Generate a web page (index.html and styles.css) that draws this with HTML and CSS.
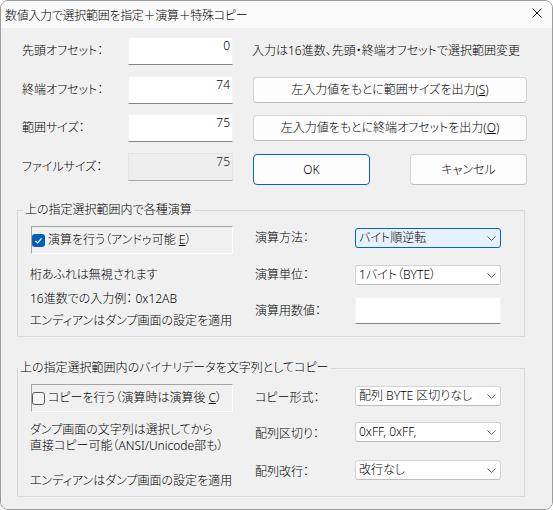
FILE: index.html
```html
<!DOCTYPE html>
<html lang="ja">
<head>
<meta charset="utf-8">
<link rel="stylesheet" href="styles.css">
</head>
<body>
<div class="window">
  <div class="titlebar">
    <span class="title">数値入力で選択範囲を指定＋演算＋特殊コピー</span>
    <svg class="close" width="10" height="10" viewBox="0 0 10 10"><path d="M0.5 0.5 L9.5 9.5 M9.5 0.5 L0.5 9.5" stroke="#1a1a1a" stroke-width="1" fill="none"/></svg>
  </div>
  <div class="content">
    <div class="top">
      <div class="lbl">先頭オフセット：</div>
      <div class="edit">0</div>
      <div class="rc note">入力は16進数、先頭・終端オフセットで選択範囲変更</div>

      <div class="lbl">終端オフセット：</div>
      <div class="edit">74</div>
      <div class="rc"><button class="btn wide">左入力値をもとに範囲サイズを出力(<u>S</u>)</button></div>

      <div class="lbl">範囲サイズ：</div>
      <div class="edit">75</div>
      <div class="rc"><button class="btn wide">左入力値をもとに終端オフセットを出力(<u>O</u>)</button></div>

      <div class="lbl">ファイルサイズ：</div>
      <div class="edit disabled">75</div>
      <div class="rc okrow"><button class="btn dlg default">OK</button><button class="btn dlg">キャンセル</button></div>
    </div>

    <fieldset class="group g1">
      <legend>上の指定選択範囲内で各種演算</legend>
      <div class="gbody">
        <div class="left">
          <div class="chkbox">
            <svg class="chk" width="13" height="13" viewBox="0 0 13 13"><rect x="0" y="0" width="13" height="13" rx="3" fill="#005fb8"/><path d="M3.4 6.9 L5.5 8.9 L9.6 4.3" stroke="#fff" stroke-width="1.2" fill="none"/></svg>
            <span>演算を行う（アンドゥ可能 <u>E</u>）</span>
          </div>
          <div class="txt t1">桁あふれは無視されます</div>
          <div class="txt t2">16進数での入力例： 0x12AB</div>
          <div class="txt t3">エンディアンはダンプ画面の設定を適用</div>
        </div>
        <div class="right">
          <div class="frow">
            <div class="flbl">演算方法：</div>
            <div class="combo focus"><span>バイト順逆転</span><svg width="9" height="5" viewBox="0 0 9 5"><polyline points="0.5,0.5 4.5,4.5 8.5,0.5" fill="none" stroke="#606060"/></svg></div>
          </div>
          <div class="frow r2">
            <div class="flbl">演算単位：</div>
            <div class="combo"><span>1バイト（BYTE）</span><svg width="9" height="5" viewBox="0 0 9 5"><polyline points="0.5,0.5 4.5,4.5 8.5,0.5" fill="none" stroke="#606060"/></svg></div>
          </div>
          <div class="frow r3">
            <div class="flbl">演算用数値：</div>
            <div class="edit val"></div>
          </div>
        </div>
      </div>
    </fieldset>

    <fieldset class="group g2">
      <legend>上の指定選択範囲内のバイナリデータを文字列としてコピー</legend>
      <div class="gbody">
        <div class="left">
          <div class="chkbox">
            <svg class="chk" width="13" height="13" viewBox="0 0 13 13"><rect x="0.5" y="0.5" width="12" height="12" rx="2.5" fill="#f7f7f7" stroke="#5a5a5a"/></svg>
            <span>コピーを行う（演算時は演算後 <u>C</u>）</span>
          </div>
          <p class="txt s1">ダンプ画面の文字列は選択してから<br>直接コピー可能（ANSI/Unicode部も）</p>
          <div class="txt s3">エンディアンはダンプ画面の設定を適用</div>
        </div>
        <div class="right">
          <div class="frow">
            <div class="flbl low">コピー形式：</div>
            <div class="combo"><span>配列 BYTE 区切りなし</span><svg width="9" height="5" viewBox="0 0 9 5"><polyline points="0.5,0.5 4.5,4.5 8.5,0.5" fill="none" stroke="#606060"/></svg></div>
          </div>
          <div class="frow q2">
            <div class="flbl low">配列区切り：</div>
            <div class="combo"><span>0xFF, 0xFF,</span><svg width="9" height="5" viewBox="0 0 9 5"><polyline points="0.5,0.5 4.5,4.5 8.5,0.5" fill="none" stroke="#606060"/></svg></div>
          </div>
          <div class="frow q3">
            <div class="flbl low">配列改行：</div>
            <div class="combo"><span>改行なし</span><svg width="9" height="5" viewBox="0 0 9 5"><polyline points="0.5,0.5 4.5,4.5 8.5,0.5" fill="none" stroke="#606060"/></svg></div>
          </div>
        </div>
      </div>
    </fieldset>
  </div>
</div>
</body>
</html>
```

FILE: styles.css
```css
* { box-sizing: border-box; }

html, body {
  margin: 0;
  background: #ffffff;
}

body {
  font-family: "Noto Sans", "Noto Sans CJK JP", sans-serif;
  font-size: 12px;
  font-weight: 300;
  line-height: 16px;
  color: #000;
  font-feature-settings: "palt";
}

.window {
  width: 553px;
  height: 510px;
  border: 1px solid #9c9c9c;
  border-radius: 8px;
  overflow: hidden;
  display: flex;
  flex-direction: column;
  background: #f0f0f0;
}

.titlebar {
  height: 27px;
  flex: none;
  background: #fafafa;
  display: flex;
  justify-content: space-between;
  align-items: flex-start;
  padding: 0 10px 0 4px;
}

.title {
  margin-top: 7px;
  line-height: 16px;
  letter-spacing: -0.3px;
}

.close {
  margin-top: 7px;
}

.content {
  flex: 1;
  background: #f0f0f0;
}

.top {
  display: grid;
  grid-template-columns: 106px 105px 294px;
  grid-template-rows: repeat(4, 28px);
  row-gap: 10.5px;
  margin-top: 9px;
  padding-left: 21px;
}

.lbl {
  align-self: center;
  white-space: nowrap;
}

.edit {
  background: #fff;
  border: 1px solid #f3f3f3;
  border-bottom-color: #868686;
  text-align: right;
  padding: 0 2px 0 0;
  line-height: 16px;
}

.edit.disabled {
  background: #ededed;
  border-color: #e4e4e4;
  border-bottom-color: #a8a8a8;
  color: #222;
}

.rc {
  padding-left: 20px;
  align-self: center;
}

.note {
  margin-left: -1px;
  white-space: nowrap;
}

.btn {
  font: inherit;
  color: #000;
  background: #fdfdfd;
  border: 1px solid #d3d3d3;
  border-bottom-color: #bdbdbd;
  border-radius: 4px;
  padding: 0;
  line-height: 16px;
}

.btn.wide {
  width: 274px;
  height: 26px;
}

.okrow {
  align-self: start;
  margin-top: 1.5px;
  display: flex;
  justify-content: space-between;
}

.btn.dlg {
  width: 117px;
  height: 31px;
}

.btn.default {
  border: 1px solid #0067c0;
}

.group {
  margin: 0 0 0 16px;
  width: 508px;
  border: 1px solid #d9d9d9;
  padding: 0;
  min-width: 0;
}

.group legend {
  padding: 0 2px;
  line-height: 16px;
  white-space: nowrap;
}

.g1 {
  margin-top: 21.5px;
  padding-bottom: 7px;
}

.g1 legend {
  margin-left: 5px;
}

.g2 {
  margin-top: 23px;
  padding-bottom: 7px;
}

.g2 legend {
  margin-left: 0;
}

.gbody {
  display: flex;
  align-items: flex-start;
  padding-top: 8px;
}

.left {
  margin-left: 13px;
  width: 202px;
  flex: none;
}

.chkbox {
  height: 28px;
  border: 1px solid;
  border-color: #a3a3a3 #ffffff #ffffff #a3a3a3;
  display: flex;
  align-items: center;
  white-space: nowrap;
}

.chk {
  flex: none;
  margin-right: 3px;
}

.txt {
  white-space: nowrap;
  margin-left: -1px;
}

.t1 { margin-top: 13px; }
.t2 { margin-top: 8px; }
.t3 { margin-top: 6px; }

.s1 {
  margin: 10px 0 0 -1px;
  line-height: 16px;
}
.s3 { margin-top: 19px; }

.right {
  margin-left: 22px;
  margin-top: 2px;
  width: 246px;
  flex: none;
}

.frow {
  display: flex;
  align-items: center;
}

.r2 { margin-top: 17px; }
.r3 { margin-top: 12px; }
.q2 { margin-top: 16px; }
.q3 { margin-top: 18px; }

.flbl {
  width: 100px;
  flex: none;
  white-space: nowrap;
}

.flbl.low {
  padding-top: 3px;
}

.combo {
  width: 146px;
  height: 20px;
  border: 1px solid #d3d3d3;
  border-bottom-color: #bdbdbd;
  border-radius: 3px;
  background: #fff;
  display: flex;
  align-items: center;
  justify-content: space-between;
  padding: 0 4px 0 3px;
  white-space: nowrap;
}

.combo.focus {
  background: #e5f1fb;
  border-color: #0067c0;
}

.edit.val {
  width: 146px;
  height: 27px;
}
```
